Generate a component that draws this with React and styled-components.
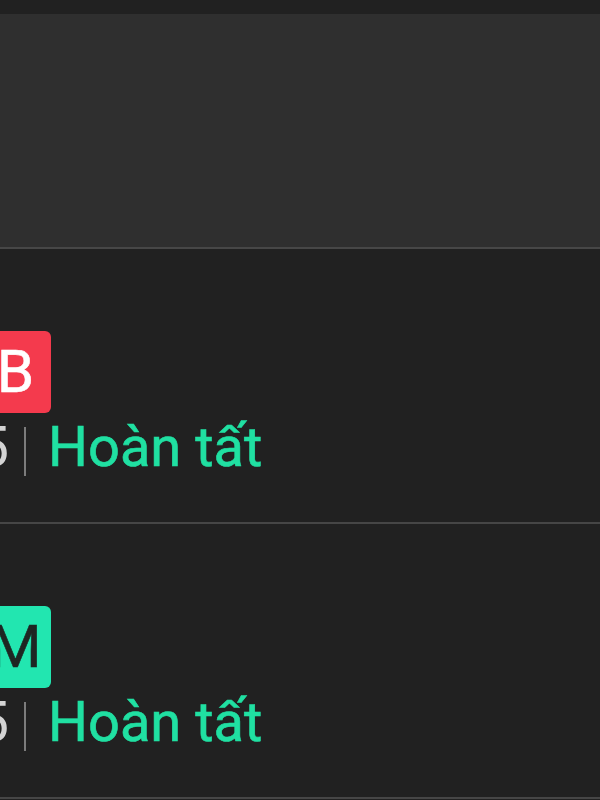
import React from "react";
import styled, { createGlobalStyle } from "styled-components";

const Global = createGlobalStyle`
  html, body { margin: 0; padding: 0; background: #212121; }
  body { font-family: Roboto, "Noto Sans", "Liberation Sans", sans-serif; overflow: hidden; }
`;

const Page = styled.div`
  width: 600px;
  height: 800px;
  background: #212121;
  display: flex;
  flex-direction: column;
  overflow: hidden;
`;

const TopBar = styled.div`
  height: 14px;
  background: #212121;
  flex: none;
`;

const Header = styled.div`
  height: 233px;
  background: #2f2f2f;
  border-bottom: 2px solid #474747;
  flex: none;
`;

const Row = styled.div`
  height: ${(p) => p.$h}px;
  padding-top: ${(p) => p.$top}px;
  box-sizing: border-box;
  border-bottom: 2px solid #464646;
  display: flex;
  flex-direction: column;
  align-items: flex-start;
  flex: none;
`;

const Badge = styled.div`
  width: 71px;
  height: 82px;
  margin-left: -20px;
  border-radius: 6px;
  background: ${(p) => p.$bg};
  color: ${(p) => p.$fg};
  font-size: 60px;
  line-height: 82px;
  text-align: center;
  font-weight: 400;
  -webkit-text-stroke: 0.6px ${(p) => p.$fg};
`;

const Meta = styled.div`
  display: flex;
  align-items: center;
  margin-top: 1px;
  font-size: 56px;
  line-height: 66px;
  font-weight: 400;
`;

const Time = styled.span`
  width: 209px;
  margin-left: -200px;
  text-align: right;
  color: #d4d4d4;
`;

const Sep = styled.span`
  width: 2px;
  height: 49px;
  background: #7c7c7c;
  margin: 0 22px 0 15px;
  transform: translateY(4px);
`;

const Status = styled.span`
  color: #20e0a2;
  -webkit-text-stroke: 0.6px #20e0a2;
`;

const items = [
  { letter: "B", bg: "#f43a4d", fg: "#ffffff", h: 275, top: 82 },
  { letter: "M", bg: "#22e6b0", fg: "#1e2623", h: 275, top: 82 },
];

export default function App() {
  return (
    <Page>
      <Global />
      <TopBar />
      <Header />
      {items.map((it, i) => (
        <Row key={i} $h={it.h} $top={it.top}>
          <Badge $bg={it.bg} $fg={it.fg}>{it.letter}</Badge>
          <Meta>
            <Time>2025</Time>
            <Sep />
            <Status>Hoàn tất</Status>
          </Meta>
        </Row>
      ))}
    </Page>
  );
}
